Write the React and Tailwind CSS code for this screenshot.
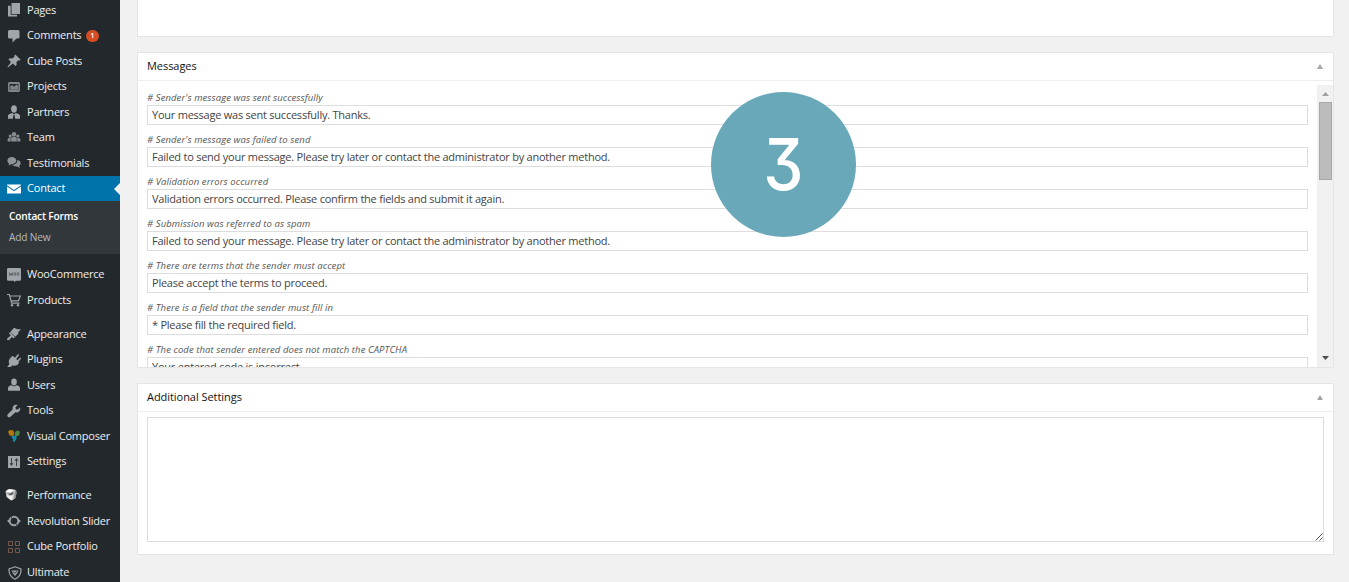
import React from 'react';

const Icon = ({ children, className = '' }) => (
  <svg viewBox="0 0 14 14" className={`h-3.5 w-3.5 shrink-0 fill-[#a0a5aa] ${className}`}>
    {children}
  </svg>
);

const icons = {
  pages: (
    <Icon>
      <path d="M4.500 0h8.500v11H4.500z" />
      <path d="M1 2.700h2.700v9.100h6.300v1.700H1z" />
    </Icon>
  ),
  comments: (
    <Icon>
      <path d="M2.500 1h8.500q1.500 0 1.500 1.500v5.500q0 1.500-1.500 1.500H9.500l-4 4V9.500h-3Q1 9.500 1 8v-5.500Q1 1 2.500 1z" />
    </Icon>
  ),
  pin: (
    <Icon>
      <path d="M8.300.5l5.400 5.200-1 .8-1.300-.2-2 2 .3 2.500-1.200 1.200-2.600-2.500L1 13.400.5 13l3.500-5L1.500 5.500l1.200-1.200 2.700.3 2.200-2-.2-1.200z" />
    </Icon>
  ),
  projects: (
    <Icon className="opacity-75">
      <path fillRule="evenodd" d="M2.500 2h9q1.500 0 1.500 1.500v7q0 1.500-1.500 1.500h-9Q1 12 1 10.500v-7Q1 2 2.500 2zM2.600 4v6h8.800V4z" />
      <path d="M3.200 9.700V6.500l2-1.500L7 6.800l2.500-2.300 1.600 1.300v3.900z" />
    </Icon>
  ),
  partners: (
    <Icon>
      <ellipse cx="7" cy="4" rx="2.900" ry="3.700" />
      <path d="M1 13.800V10.500Q1.500 9 5.300 8.100L7 9.500l1.700-1.400Q12.500 9 13 10.500v3.300H8.200L7.500 10h-1l-.7 3.800z" />
    </Icon>
  ),
  team: (
    <Icon className="opacity-80">
      <circle cx="7" cy="3.200" r="2.200" />
      <circle cx="3.200" cy="5" r="1.600" />
      <circle cx="10.800" cy="5" r="1.600" />
      <path d="M4.200 10.500V7Q5 5.400 7 5.400T9.800 7v3.500zM.6 10.500V8.200Q1.300 6.600 3.700 6.600v3.900zM10.300 10.500V6.600q2.400 0 3.100 1.600v2.300z" />
    </Icon>
  ),
  testimonials: (
    <Icon className="opacity-85">
      <path d="M4.800 1c2.500 0 4.500 1.500 4.500 3.600S7.300 8.200 4.800 8.200h-1L1.600 9.800 2 7.500C1.100 6.900.4 5.800.4 4.700.4 2.600 2.300 1 4.800 1z" />
      <path d="M10.300 4c2 .3 3.400 1.600 3.400 3.300 0 1-.5 1.800-1.400 2.400l.5 2.300-2.600-1.500c-2.400.2-4.200-.5-4.900-1.700 3 .1 5.200-1.900 5-4.800z" />
    </Icon>
  ),
  contact: (
    <Icon className="fill-white">
      <path d="M0 3.200V2.500h14v.7L7 8z" />
      <path d="M0 4.600l7 4.700 7-4.700v7H0z" />
    </Icon>
  ),
  woo: (
    <Icon>
      <path d="M1.300 0h11.400Q14 0 14 1.300v10.200Q14 12.700 12.700 12.700H9l-1.300 1.300-.9-1.300H1.300Q0 12.700 0 11.500V1.300Q0 0 1.300 0z" />
      <g fill="none" stroke="#55595e" strokeWidth=".8">
        <path d="M2 4.500l.8 3.200L4 5l1 2.700.7-3.200" />
        <ellipse cx="7.800" cy="6" rx="1" ry="1.500" />
        <ellipse cx="11" cy="6" rx="1" ry="1.500" />
      </g>
    </Icon>
  ),
  cart: (
    <Icon>
      <path fill="none" stroke="#a0a5aa" strokeWidth="1.200" d="M0 1.500h2.400l2.200 8.700h7.900M3 3h10.400l-2 4.800H4" />
      <circle cx="5" cy="12.300" r="1.200" />
      <circle cx="11" cy="12.300" r="1.200" />
    </Icon>
  ),
  brush: (
    <Icon>
      <path d="M7 .8l3.500 1.500 3.500-.1-2.800 3 .2 1.500-3.200 3.100L3.300 5z" />
      <path d="M3 5.100l5 5.100-1.400 1-1.700-1.200-3 3.200L0 12.900l.2-1.300 3.600-3.200L2 6.500z" />
    </Icon>
  ),
  plug: (
    <Icon>
      <path d="M7.800 4.800L11 1l1.200 1.100-3 3.900 1.300 1.200 2.800-2.700.9 1.100-2.600 3 .4.800-1 1.900c-1.500 1.600-4 1.800-5.300.9L3.500 13.900H.2l2.200-3C1.300 9 1.600 7 3 5.500l2.200-2.400 1.500.5z" />
    </Icon>
  ),
  user: (
    <Icon>
      <ellipse cx="7" cy="4" rx="2.800" ry="3.400" />
      <path d="M1 12.800V10q.3-2.200 3.600-2.700Q7 9.300 9.400 7.300 12.700 7.800 13 10v2.800z" />
    </Icon>
  ),
  wrench: (
    <Icon>
      <path d="M13 3.400L10.800 5.500 8.900 5.200 8.500 3.300l2.200-2.200C8.900.4 7.100 1 6.200 2.200c-.7 1-.8 2.100-.4 3L1 10.100c-.9.9-.9 2-.2 2.700.7.800 1.900.7 2.700-.1L8.500 8.200c1.300.4 2.600.2 3.600-.8 1-1 1.400-2.500.9-4z" />
    </Icon>
  ),
  composer: (
    <Icon>
      <path fill="#b5780f" d="M1 2.500L3 1l3.300.5 1 2.700L6 7 2.500 6.500z" />
      <path fill="#4f8a45" d="M8.200 3l2-1.500 2.700.9-.5 3-2.200 2.100-2.300-1.100z" />
      <path fill="#168aa5" d="M4.300 8l2-1.700 3.200 1v2.400L7.500 13l-1.700-.5.200-2.200z" />
    </Icon>
  ),
  settings: (
    <Icon>
      <path d="M1 1h12v12H1z" />
      <path fill="none" stroke="#3c4146" strokeWidth="1" d="M4.500 3v7M3 8l1.500 2.500L6 8M9.500 11V4M8 6l1.500-2.500L11 6" />
    </Icon>
  ),
  performance: (
    <Icon className="-translate-x-[2px] -translate-y-px">
      <path fill="#c6c6c6" d="M.5 3.200Q3 .8 5 1l5 .7q1.800.8 1.600 3l-1 5Q8 12.500 6 12.500L1.500 9z" />
      <path fill="#fff" d="M1 3.200L4 1.300l5.500.7-4 2.400z" />
      <path fill="#4b4f53" d="M2 5.200l3 .5L7.300 4.300l1.500.3-1.500 1.900L5 7.200z" />
      <path fill="#efefef" d="M2 7l3 1.200 3-1-.8 4-1.700.5-3-3z" />
      <path fill="#8c8f92" d="M10 2.800l1.400 1.200-.7 5.500-2 1.300z" />
    </Icon>
  ),
  revolution: (
    <Icon>
      <circle cx="7" cy="7" r="4.300" fill="none" stroke="#9ba0a5" strokeWidth="2" />
      <path d="M0 7l3-2.500v5zM14 7l-3-2.500v5z" />
      <path fill="none" stroke="#23282d" strokeWidth=".8" d="M3.500 2l1.500 2.200M10.500 12L9 9.800" />
    </Icon>
  ),
  cube: (
    <Icon>
      <path fill="none" stroke="#75594a" strokeWidth="1" d="M1.500 1.500h4v4h-4zM8.500 1.500h4v4h-4zM1.500 8.500h4v4h-4zM8.500 8.500h4v4h-4z" />
    </Icon>
  ),
  ultimate: (
    <Icon className="translate-x-px translate-y-px">
      <path fill="none" stroke="#a0a5aa" strokeWidth="1.200" d="M7 .8l6 2.200c.3 4-1.500 8-6 10.300C2.500 11 .7 7 1 3z" />
      <path d="M3.500 4.500h7L9 7.500 7 10 5 7.500z" />
      <path stroke="#23282d" strokeWidth=".8" fill="none" d="M5 5.500l1.800 1.800L9 5" />
    </Icon>
  ),
};

const primary = [
  ['Pages', 'pages'],
  ['Comments', 'comments'],
  ['Cube Posts', 'pin'],
  ['Projects', 'projects'],
  ['Partners', 'partners'],
  ['Team', 'team'],
  ['Testimonials', 'testimonials'],
];
const shop = [['WooCommerce', 'woo'], ['Products', 'cart']];
const admin = [
  ['Appearance', 'brush'],
  ['Plugins', 'plug'],
  ['Users', 'user'],
  ['Tools', 'wrench'],
  ['Visual Composer', 'composer'],
  ['Settings', 'settings'],
];
const extras = [
  ['Performance', 'performance'],
  ['Revolution Slider', 'revolution'],
  ['Cube Portfolio', 'cube'],
  ['Ultimate', 'ultimate'],
];

const messages = [
  ["# Sender's message was sent successfully", 'Your message was sent successfully. Thanks.'],
  ["# Sender's message was failed to send", 'Failed to send your message. Please try later or contact the administrator by another method.'],
  ['# Validation errors occurred', 'Validation errors occurred. Please confirm the fields and submit it again.'],
  ['# Submission was referred to as spam', 'Failed to send your message. Please try later or contact the administrator by another method.'],
  ['# There are terms that the sender must accept', 'Please accept the terms to proceed.'],
  ['# There is a field that the sender must fill in', '* Please fill the required field.'],
  ['# The code that sender entered does not match the CAPTCHA', 'Your entered code is incorrect.'],
];

function MenuItem({ label, icon, active }) {
  return (
    <a className={`relative flex h-[25.5px] shrink-0 items-center gap-1.5 whitespace-nowrap pl-[7px] text-[11px] tracking-[-0.2px] ${active ? 'bg-[#0073aa] text-white' : 'text-[#eee]'}`}>
      {icons[icon]}
      <span>{label}</span>
      {label === 'Comments' && (
        <span className="-ml-[1.5px] mt-px flex h-3 w-[13px] items-center justify-center rounded-full bg-[#d54e21] text-[7.5px] font-semibold tracking-normal text-white">1</span>
      )}
      {active && (
        <svg viewBox="0 0 6 12" className="absolute right-0 top-[7px] h-3 w-1.5 fill-[#f1f1f1]">
          <path d="M6 0v12L0 6z" />
        </svg>
      )}
    </a>
  );
}

const MenuGroup = ({ items }) => items.map(([label, icon]) => <MenuItem key={label} label={label} icon={icon} />);

function PanelHeader({ title }) {
  return (
    <div className="flex h-7 shrink-0 items-center justify-between border-b border-[#eee] pl-[9px] pr-2.5">
      <h3 className="text-[11px] font-medium tracking-[-0.05px] text-[#111]">{title}</h3>
      <svg viewBox="0 0 6 5" className="h-[5px] w-1.5 fill-[#a0a5aa]"><path d="M3 0l3 5H0z" /></svg>
    </div>
  );
}

export default function App() {
  return (
    <div className="relative flex h-[582px] w-[1349px] overflow-hidden bg-[#f1f1f1] font-['Open_Sans',sans-serif]">
      <nav className="flex w-[120px] shrink-0 flex-col bg-[#23282d]">
        <div className="-mt-[2.75px] flex flex-col">
          <MenuGroup items={primary} />
          <MenuItem label="Contact" icon="contact" active />
        </div>
        <div className="flex h-[52.5px] shrink-0 flex-col bg-[#32373c] pl-[9px] pt-[4.5px] text-[10.2px] tracking-[-0.2px]">
          <a className="h-[21px] leading-[21px] font-semibold text-white">Contact Forms</a>
          <a className="h-[21px] leading-[21px] text-[#b4b9be]">Add New</a>
        </div>
        <div className="mt-2 flex flex-col gap-[8.5px]">
          <div><MenuGroup items={shop} /></div>
          <div><MenuGroup items={admin} /></div>
          <div><MenuGroup items={extras} /></div>
        </div>
      </nav>

      <main className="ml-[17px] flex w-[1197px] flex-col">
        <section className="h-[37px] shrink-0 border border-t-0 border-[#e5e5e5] bg-white" />

        <section className="mt-[15px] flex h-[316px] shrink-0 flex-col border border-[#e5e5e5] bg-white">
          <PanelHeader title="Messages" />
          <div className="mt-1 flex min-h-0 flex-1">
            <div className="flex min-w-0 flex-1 flex-col overflow-hidden pl-[9px] pr-[9px] pt-[5px]">
              {messages.map(([label, value]) => (
                <div key={label} className="h-[42px] shrink-0">
                  <label className="block h-[15px] text-[9.5px] leading-[15px] tracking-[0.09px] italic text-[#555]">{label}</label>
                  <div className="h-5 border border-[#ddd] pl-1 text-[11px] leading-[18px] tracking-[-0.235px] text-[#444]">{value}</div>
                </div>
              ))}
            </div>
            <div className="flex w-4 shrink-0 flex-col items-center justify-between bg-[#f1f1f1]">
              <div className="flex flex-col items-center">
                <svg viewBox="0 0 7 4" className="mb-[6px] mt-[7px] h-1 w-[7px] fill-[#a0a0a0]"><path d="M3.500 0L7 4H0z" /></svg>
                <div className="h-[78px] w-[13px] border border-[#a8a8a8] bg-[#bcbcbc]" />
              </div>
              <svg viewBox="0 0 7 4" className="mb-[7px] h-1 w-[7px] fill-[#505050]"><path d="M0 0h7L3.500 4z" /></svg>
            </div>
          </div>
        </section>

        <section className="mt-[15px] flex h-[172px] shrink-0 flex-col border border-[#e5e5e5] bg-white">
          <PanelHeader title="Additional Settings" />
          <div className="mx-[9px] mt-[5px] flex h-[125px] items-end justify-end border border-[#ddd]">
            <svg viewBox="0 0 8 8" className="h-2 w-2 stroke-[#555]"><path d="M.5 7.500l7-7M4.500 7.500l3-3" /></svg>
          </div>
        </section>
      </main>

      <div className="absolute left-[710.5px] top-[92px] flex h-[145px] w-[145px] items-center justify-center rounded-full bg-[#68a8b9] font-['Inter',sans-serif] text-[71px] font-medium leading-none text-white [font-feature-settings:'cv09']">
        <span className="-translate-y-[0.5px] scale-x-[0.9]">3</span>
      </div>
    </div>
  );
}
